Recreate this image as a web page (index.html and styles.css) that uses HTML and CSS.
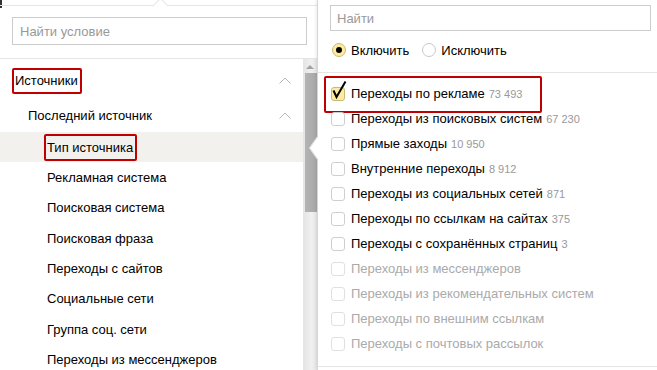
FILE: index.html
```html
<!DOCTYPE html>
<html lang="ru">
<head>
    <meta charset="UTF-8">
    <meta name="viewport" content="width=device-width, initial-scale=1.0">
    <title>Условия сегментации</title>
    <link rel="stylesheet" href="styles.css">
</head>
<body>

    <div class="corner"></div>

    <!-- Conditions tree -->
    <div class="conditions">
        <div class="conditions-head">
            <input class="search" type="text" placeholder="Найти условие">
        </div>
        <div class="tree">
            <div class="tree-list">
                <div class="group">
                    <span class="mark">Источники</span>
                    <svg class="chevron" width="12" height="7" viewBox="0 0 12 7"><polyline points="0.5,6.5 6,1 11.5,6.5"/></svg>
                </div>
                <div class="subgroup">
                    <span>Последний источник</span>
                    <svg class="chevron" width="12" height="7" viewBox="0 0 12 7"><polyline points="0.5,6.5 6,1 11.5,6.5"/></svg>
                </div>
                <div class="item active"><span class="mark">Тип источника</span></div>
                <div class="item">Рекламная система</div>
                <div class="item">Поисковая система</div>
                <div class="item">Поисковая фраза</div>
                <div class="item">Переходы с сайтов</div>
                <div class="item">Социальные сети</div>
                <div class="item">Группа соц. сети</div>
                <div class="item">Переходы из мессенджеров</div>
            </div>
            <div class="scrollbar">
                <span class="scroll-up"></span>
                <span class="scroll-thumb"></span>
            </div>
        </div>
    </div>

    <!-- Values panel -->
    <div class="values">
        <span class="pointer"></span>
        <div class="values-head">
            <input class="search small" type="text" placeholder="Найти">
            <div class="mode">
                <label class="radio"><span class="radio-box checked"></span>Включить</label>
                <label class="radio"><span class="radio-box"></span>Исключить</label>
            </div>
        </div>

        <div class="value-list">
            <div class="value marked">
                <span class="check checked"><svg width="14" height="14" viewBox="0 0 14 14"><polyline points="2.5,3.5 5.5,10 14.5,-5.5"/></svg></span>
                <span class="label">Переходы по рекламе</span>
                <span class="count">73 493</span>
            </div>
            <div class="value"><span class="check"></span><span class="label">Переходы из поисковых систем</span><span class="count">67 230</span></div>
            <div class="value"><span class="check"></span><span class="label">Прямые заходы</span><span class="count">10 950</span></div>
            <div class="value"><span class="check"></span><span class="label">Внутренние переходы</span><span class="count">8 912</span></div>
            <div class="value"><span class="check"></span><span class="label">Переходы из социальных сетей</span><span class="count">871</span></div>
            <div class="value"><span class="check"></span><span class="label">Переходы по ссылкам на сайтах</span><span class="count">375</span></div>
            <div class="value"><span class="check"></span><span class="label">Переходы с сохранённых страниц</span><span class="count">3</span></div>
            <div class="value disabled"><span class="check"></span><span class="label">Переходы из мессенджеров</span></div>
            <div class="value disabled"><span class="check"></span><span class="label">Переходы из рекомендательных систем</span></div>
            <div class="value disabled"><span class="check"></span><span class="label">Переходы по внешним ссылкам</span></div>
            <div class="value disabled"><span class="check"></span><span class="label">Переходы с почтовых рассылок</span></div>
        </div>
    </div>

</body>
</html>
```

FILE: styles.css
```css
* {
    margin: 0;
    padding: 0;
    box-sizing: border-box;
    font-family: "Liberation Sans", Arial, sans-serif;
}

:root {
    --text: #000000;
    --muted: #999999;
    --line: #e5e5e5;
    --mark: #c00000;
    --hover-bg: #f2f1ed;
    --yellow: #ffeba0;
}

body {
    width: 657px;
    height: 370px;
    overflow: hidden;
    display: flex;
    background-color: #ffffff;
    color: var(--text);
    font-size: 13px;
    position: relative;
}

.corner {
    position: absolute;
    top: 0;
    left: 0;
    width: 2px;
    height: 8px;
    background-color: #333;
}

/* Left: conditions */
.conditions {
    width: 317px;
    margin-top: 5px;
    border-top: 1px solid var(--line);
    position: relative;
    display: flex;
    flex-direction: column;
}

/* popup arrow on top border */
.conditions::before {
    content: "";
    position: absolute;
    top: -6px;
    left: 155px;
    width: 10px;
    height: 10px;
    background-color: #fff;
    border-top: 1px solid var(--line);
    border-left: 1px solid var(--line);
    transform: rotate(45deg);
}

.conditions-head {
    padding: 11px 10px 13px 12px;
    border-bottom: 1px solid var(--line);
}

.search {
    display: block;
    width: 295px;
    height: 28px;
    border: 1px solid #cccccc;
    padding: 0 7px;
    font-size: 13px;
    color: var(--text);
    outline: none;
}

.search::placeholder {
    color: #999999;
}

.search.small {
    width: 321px;
    height: 26px;
    padding: 0 6px;
}

.tree {
    flex: 1;
    display: flex;
}

.tree-list {
    flex: 1;
    padding-top: 4px;
}

.group,
.subgroup {
    display: flex;
    align-items: center;
    justify-content: space-between;
    padding-right: 12px;
}

.group {
    height: 35px;
    padding-left: 12px;
}

.subgroup {
    height: 34px;
    padding-left: 28px;
}

.chevron {
    fill: none;
    stroke: #b8b8b8;
    stroke-width: 1;
}

.item {
    height: 30.33px;
    display: flex;
    align-items: center;
    padding-left: 47px;
}

.item.active {
    background-color: var(--hover-bg);
}

.mark {
    border: 2px solid var(--mark);
    border-radius: 2px;
    padding: 3px 2px 4px 1px;
    line-height: 15px;
}

.item .mark {
    margin-left: -3px;
    padding: 4px 2px 4px 1px;
}

/* Scrollbar */
.scrollbar {
    width: 14px;
    background: linear-gradient(to right, #e4e4e4, #f0f0f0 60%, #e6e6e6);
    display: flex;
    flex-direction: column;
    align-items: flex-end;
}

.scroll-up {
    width: 0;
    height: 0;
    margin: 6px 3px 4px 0;
    border-left: 4px solid transparent;
    border-right: 4px solid transparent;
    border-bottom: 4px solid #a3a3a3;
}

.scroll-thumb {
    width: 12px;
    height: 139px;
    background: linear-gradient(to right, #b4b4b4, #a8a8a8);
}

/* Right: values */
.values {
    width: 340px;
    border-left: 1px solid #d6d6d6;
    box-shadow: -1px 0 3px rgba(0, 0, 0, 0.08);
    background-color: #fff;
    position: relative;
    z-index: 2;
}

.pointer {
    position: absolute;
    top: 140px;
    left: -9px;
    width: 16px;
    height: 16px;
    background-color: #fff;
    border-bottom: 1px solid #d6d6d6;
    border-left: 1px solid #d6d6d6;
    transform: scaleX(0.7) rotate(45deg);
}

.values-head {
    padding: 5px 6px 0 12px;
    border-bottom: 1px solid var(--line);
}

.mode {
    display: flex;
    align-items: center;
    height: 20px;
    margin: 9px 0 12px 2px;
}

.radio {
    display: flex;
    align-items: center;
    margin-right: 13px;
    font-size: 13px;
}

.radio-box {
    width: 14px;
    height: 14px;
    border-radius: 50%;
    border: 1px solid #c8c8c8;
    margin-right: 5px;
    display: flex;
    align-items: center;
    justify-content: center;
}

.radio-box.checked {
    background-color: var(--yellow);
    border-color: #c9b878;
}

.radio-box.checked::after {
    content: "";
    width: 6px;
    height: 6px;
    border-radius: 50%;
    background-color: #000;
}

.value-list {
    padding: 8px 0 10px 13px;
    border-bottom: 1px solid var(--line);
}

.value {
    height: 25px;
    display: flex;
    align-items: center;
    white-space: nowrap;
    position: relative;
}

.value.marked::after {
    content: "";
    position: absolute;
    top: -5px;
    left: -7px;
    width: 214px;
    height: 33px;
    border: 2px solid var(--mark);
    border-radius: 2px;
}

.check {
    width: 14px;
    height: 14px;
    border: 1px solid #cfcfcf;
    border-radius: 3px;
    margin-right: 6px;
    flex-shrink: 0;
    position: relative;
}

.check.checked {
    background-color: var(--yellow);
    border-color: #c9b878;
}

.check svg {
    position: absolute;
    top: -1px;
    left: -1px;
    overflow: visible;
    fill: none;
    stroke: #000;
    stroke-width: 2;
}

.count {
    color: var(--muted);
    font-size: 11px;
    margin-left: 4px;
}

.value.disabled {
    color: #aaaaaa;
}

.value.disabled .check {
    border-color: #e0e0e0;
}
```
